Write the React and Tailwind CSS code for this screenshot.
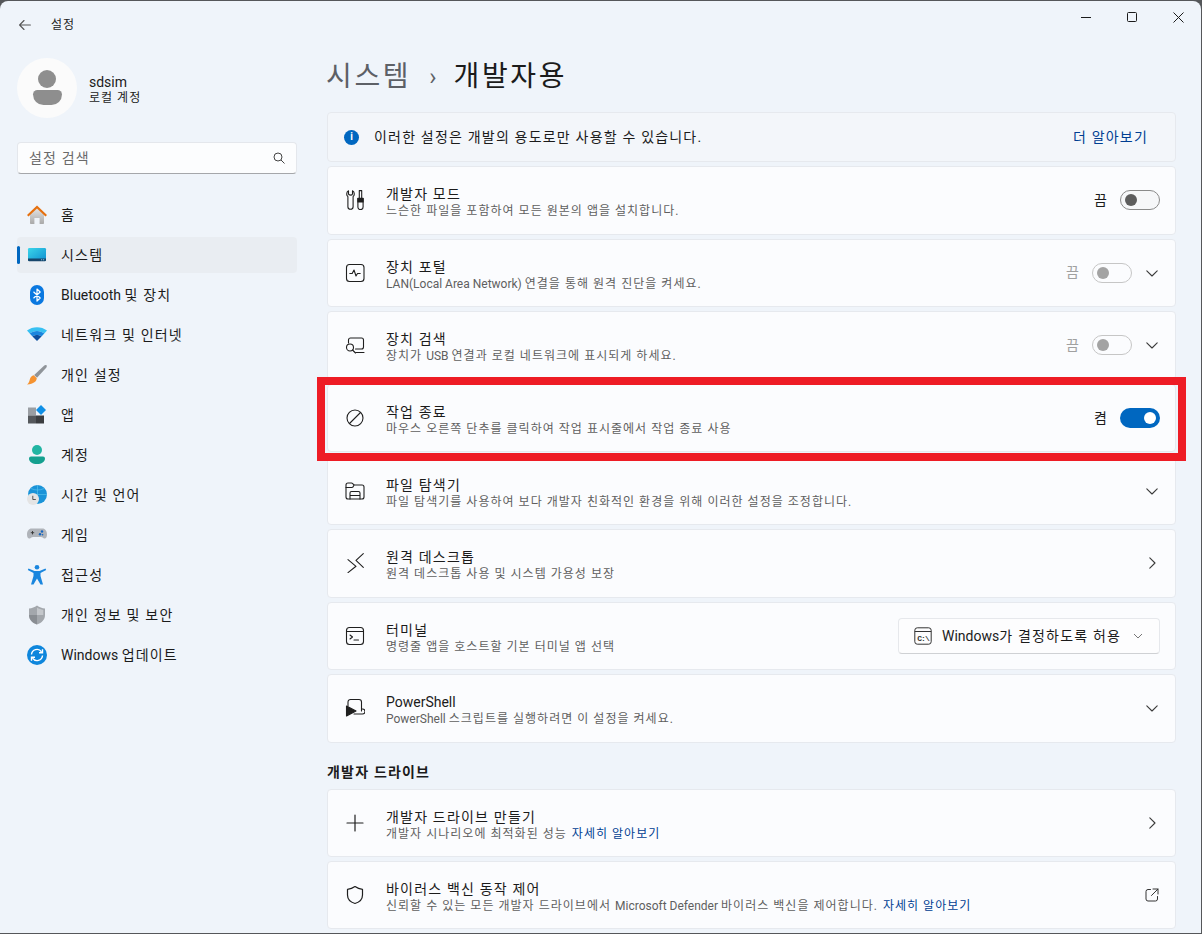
import React from "react";

// hangul runs need extra spacing to match the reference's wider korean face
const T = ({ children }) =>
    String(children)
        .split(/([\uAC00-\uD7A3][\uAC00-\uD7A3 .]*)/)
        .map((part, i) => (i % 2 ? <span key={i} className="tracking-[0.085em]">{part}</span> : part));

const Ico = ({ children, className = "w-5 h-5", vb = "0 0 20 20", sw = 1.1 }) => (
    <svg className={className} viewBox={vb} fill="none" stroke="#1f1f1f" strokeWidth={sw} strokeLinecap="round" strokeLinejoin="round">
        {children}
    </svg>
);

const Chevron = ({ dir = "down", color = "#3a3a3a" }) => (
    <svg className="w-4 h-4" viewBox="0 0 16 16" fill="none" stroke={color} strokeWidth="1.1" strokeLinecap="round" strokeLinejoin="round">
        {dir === "down" ? <path d="M2.8 5.8 8 11l5.2-5.2" /> : <path d="M5.8 2.8 11 8l-5.2 5.2" />}
    </svg>
);

const navIcons = {
    home: (
        <svg className="w-5 h-5" viewBox="0 0 20 20">
            <defs>
                <linearGradient id="hm" x1="0" y1="0" x2="0" y2="1"><stop offset="0" stopColor="#e6e6e6" /><stop offset="1" stopColor="#a9a9a9" /></linearGradient>
            </defs>
            <path d="M3 9 10 2.600 17 9v9.200a.8.8 0 0 1-.8.8H12.600v-6H7.400v6H3.800a.8.8 0 0 1-.8-.8Z" fill="url(#hm)" />
            <path d="M0 10 10 .5 20 10l-1.500 1.400L10 3.400 1.500 11.400Z" fill="#e5700f" />
        </svg>
    ),
    system: (
        <svg className="w-5 h-5" viewBox="0 0 20 20">
            <defs>
                <linearGradient id="sy" x1="0" y1="0" x2="1" y2="1"><stop offset="0" stopColor="#3bd5ea" /><stop offset="1" stopColor="#0f8fd0" /></linearGradient>
            </defs>
            <rect x="1" y="3" width="18" height="13" rx="1.200" fill="url(#sy)" />
            <path d="M1 13.500h18v1.500a1.200 1.200 0 0 1-1.200 1.200H2.200A1.200 1.200 0 0 1 1 15Z" fill="#17456b" />
            <rect x="14" y="14.300" width="1.200" height="1" fill="#7fc6e6" />
            <rect x="16" y="14.300" width="1.200" height="1" fill="#7fc6e6" />
        </svg>
    ),
    bluetooth: (
        <svg className="w-5 h-5" viewBox="0 0 20 20">
            <rect x="3" y="0" width="14" height="20" rx="7" fill="#0a78e0" />
            <path d="M6.500 6.800 13.200 13 10 16V4l3.200 3-6.700 6.200" fill="none" stroke="#fff" strokeWidth="1.200" strokeLinejoin="round" />
        </svg>
    ),
    wifi: (
        <svg className="w-5 h-5" viewBox="0 0 20 20">
            <path d="M0 5.500C5.500 1 14.500 1 20 5.500l-2.700 3C13 5 7 5 2.700 8.500Z" fill="#37c0f2" />
            <path d="M2.700 8.500C7 5 13 5 17.300 8.500L14.500 11.500C12 9.500 8 9.500 5.500 11.500Z" fill="#1a86de" />
            <path d="M5.500 11.500C8 9.500 12 9.500 14.500 11.500L10 16Z" fill="#0d4f9e" />
        </svg>
    ),
    brush: (
        <svg className="w-5 h-5" viewBox="0 0 20 20">
            <path d="M19.500.3c.6.8.3 1.800-.3 2.500L10 12.800 7.200 10 17 .8c.7-.6 1.800-1.100 2.500-.5Z" fill="#8f9499" />
            <path d="M6.800 10.300 9.800 13.300c-.3 3-2.800 5.700-9.800 6.200 1.800-1.200 2.300-3 2.800-5C3.300 12.300 4.700 10.700 6.800 10.300Z" fill="#f59331" />
        </svg>
    ),
    apps: (
        <svg className="w-5 h-5" viewBox="0 0 20 20">
            <rect x="1" y="2.500" width="8" height="8" fill="#9a9ea3" />
            <rect x="1" y="10.500" width="8" height="8" fill="#55585c" />
            <rect x="9" y="10.500" width="8" height="8" fill="#3b3d40" />
            <path d="M14 0 19 5l-5 5-5-5Z" fill="#0f8fe6" />
        </svg>
    ),
    account: (
        <svg className="w-5 h-5" viewBox="0 0 20 20">
            <circle cx="10" cy="5" r="5" fill="#21b5a3" />
            <path d="M2 13.500A2 2 0 0 1 4 11.500h12a2 2 0 0 1 2 2c0 3.500-3.500 5.500-8 5.500s-8-2-8-5.500Z" fill="#14a08f" />
        </svg>
    ),
    time: (
        <svg className="w-5 h-5" viewBox="0 0 20 20">
            <circle cx="10.500" cy="9.500" r="9.500" fill="#1a93d8" />
            <path d="M10.500 0v19M1 9.500h19M4 3.500c4 2 9 2 13 0" stroke="#5cc6ee" strokeWidth=".6" fill="none" />
            <circle cx="6" cy="14" r="6" fill="#e4e4e4" />
            <path d="M5.800 10.800V14.500H8.800" stroke="#444" strokeWidth=".9" fill="none" />
        </svg>
    ),
    game: (
        <svg className="w-5 h-5" viewBox="0 0 20 20">
            <path d="M4.500 3.500h11c2.500 0 4.500 2.500 4.500 6s-1.500 4.500-3 3.900c-1-.5-1.700-1.400-3-1.400H6c-1.300 0-2 .9-3 1.400-1.500.6-3-.4-3-3.900s2-6 4.500-6Z" fill="#b0b4ba" />
            <path d="M3.800 7.700h3.400M5.500 6v3.400" stroke="#333" strokeWidth=".9" />
            <circle cx="15" cy="6.500" r="1.200" fill="#1565c0" />
            <circle cx="13" cy="9.200" r="1.200" fill="#1565c0" />
            <circle cx="15.600" cy="9.800" r=".8" fill="#1565c0" />
        </svg>
    ),
    access: (
        <svg className="w-5 h-5" viewBox="0 0 20 20">
            <circle cx="10" cy="2.300" r="2.300" fill="#1a86de" />
            <path d="M1.500 3.500 7.500 6h5l6-2.500.7 1.600-5.700 3v2.800L16 19.500h-2.500L10 13.500 6.500 19.500H4L6.500 10.900V8.100L.8 5.100Z" fill="#1a86de" />
        </svg>
    ),
    privacy: (
        <svg className="w-5 h-5" viewBox="0 0 20 20">
            <path d="M10 .5c2.500 1.800 5 2.800 8 3v6.500c0 4.500-3 7.800-8 9.500-5-1.700-8-5-8-9.500V3.500c3-.2 5.500-1.200 8-3Z" fill="#a3a7ac" />
            <path d="M10 .5v19c-5-1.700-8-5-8-9.500h8Z" fill="#74787d" opacity=".55" />
            <path d="M10 2.500c2 1.300 4 2.100 6.300 2.400V10H10Z" fill="#c4c7cb" />
        </svg>
    ),
    update: (
        <svg className="w-5 h-5" viewBox="0 0 20 20">
            <circle cx="10" cy="10" r="10" fill="#0e86dc" />
            <path d="M4.500 9.500A5.500 5.500 0 0 1 14.500 6.800M15.500 10.500A5.500 5.500 0 0 1 5.500 13.200" fill="none" stroke="#fff" strokeWidth="1.400" />
            <path d="M15.500 4.300v3.500H12M4.500 15.700v-3.500H8" fill="none" stroke="#fff" strokeWidth="1.400" />
        </svg>
    ),
};

const navItems = [
    ["home", "홈"],
    ["system", "시스템", true],
    ["bluetooth", "Bluetooth 및 장치"],
    ["wifi", "네트워크 및 인터넷"],
    ["brush", "개인 설정"],
    ["apps", "앱"],
    ["account", "계정"],
    ["time", "시간 및 언어"],
    ["game", "게임"],
    ["access", "접근성"],
    ["privacy", "개인 정보 및 보안"],
    ["update", "Windows 업데이트"],
];

const rowIcons = {
    dev: (
        <Ico>
            <path d="M3.500.8C2.300 1.400 1.700 2.600 1.700 3.900c0 1.200.5 2.200 1.200 2.800v10a2.600 2.600 0 0 0 5.200 0v-10c.7-.6 1.200-1.600 1.200-2.800 0-1.300-.6-2.500-1.800-3.100v3c0 .8-.6 1.300-1.500 1.300s-2.500-.5-2.500-1.300Z" />
            <path d="M14.300.6h2.400v7.600h-2.400ZM12.900 8.200h5.200v8.800a2.600 2.600 0 0 1-5.200 0Z" />
            <path d="M12.900 8.600h5.200v3.400h-5.200Z" fill="#1f1f1f" />
        </Ico>
    ),
    portal: (
        <Ico>
            <rect x="1.500" y="1.500" width="17.500" height="17" rx="3" />
            <path d="M4.800 10.500h2.400L9 7l2 6 1.500-2.500h2.700" />
        </Ico>
    ),
    search: (
        <Ico>
            <path d="M3.500 8V5a2 2 0 0 1 2-2h11a2 2 0 0 1 2 2v7a2 2 0 0 1-2 2h-6" />
            <circle cx="5" cy="12.500" r="3.500" />
            <path d="M7.500 15 10.500 18M11 17.500h8" />
        </Ico>
    ),
    block: (
        <Ico>
            <circle cx="10" cy="10" r="8" />
            <path d="M4.500 15.500 15.500 4.500" />
        </Ico>
    ),
    folder: (
        <Ico>
            <path d="M1 4a2 2 0 0 1 2-2h3.500c.8 0 1.300.9 2 1.500.4.300.8.500 1.300.5H17a2 2 0 0 1 2 2v10a2 2 0 0 1-2 2H3a2 2 0 0 1-2-2Z" />
            <path d="M1 6.500h6c.8 0 1.200-.5 1.800-2" />
            <path d="M5 18v-6a1.500 1.500 0 0 1 1.500-1.500h7A1.500 1.500 0 0 1 15 12v6M5 14.500h10" />
        </Ico>
    ),
    remote: (
        <Ico>
            <path d="M3 6.600 11 13.300 3 19.600" />
            <path d="M18.300.6 11 7.300 18.300 14.300" />
        </Ico>
    ),
    terminal: (
        <Ico>
            <rect x="1.500" y="1.500" width="17" height="17" rx="3" />
            <path d="M1.500 5.500h17M5 9l2.500 2L5 13M9 14h4.500" />
        </Ico>
    ),
    powershell: (
        <Ico>
            <path d="M3 8V4a2.500 2.500 0 0 1 2.500-2.500H14A2.500 2.500 0 0 1 16.500 4v9" />
            <path d="M16.500 11h1a1.500 1.500 0 0 1 0 5H9" />
            <path d="M1.500 8 11 13 1.500 18Z" fill="#1f1f1f" />
        </Ico>
    ),
    plus: (
        <Ico sw="1.200">
            <path d="M10 2v16M2 10h16" />
        </Ico>
    ),
    shield: (
        <Ico sw="1.200">
            <path d="M10 1.500c2.300 1.700 4.700 2.600 7.500 2.800v5.700c0 4-2.500 7-7.500 8.500-5-1.500-7.500-4.500-7.500-8.500V4.300C5.300 4.100 7.700 3.200 10 1.500Z" />
        </Ico>
    ),
};

const Toggle = ({ on, disabled }) => {
    if (on) {
        return (
            <div className="w-10 h-5 rounded-full bg-[#0067c0] flex items-center justify-end pr-1">
                <div className="w-3 h-3 rounded-full bg-white" />
            </div>
        );
    }
    return (
        <div className={disabled ? "w-10 h-5 rounded-full border border-[#c6c6c6] flex items-center pl-[3.500px]" : "w-10 h-5 rounded-full border border-[#8a8a8a] bg-[#f6f7f9] flex items-center pl-[3.500px]"}>
            <div className={disabled ? "w-3 h-3 rounded-full bg-[#a3a3a3]" : "w-3 h-3 rounded-full bg-[#5d5d5d]"} />
        </div>
    );
};

const Row = ({ icon, title, sub, link, children, className = "h-[68.6px]" }) => (
    <div className={`${className} flex items-center rounded-[4px] border border-[#e6e9ee] bg-[#fbfcfe] pl-[17px] pr-[15px]`}>
        <div className="w-5 h-5 shrink-0">{rowIcons[icon]}</div>
        <div className="ml-[21px] flex-1 min-w-0 mt-[4px]">
            <div className="text-[14px] leading-[18px] text-[#1b1b1b]"><T>{title}</T></div>
            <div className="text-[12px] leading-[16px] text-[#5f5f5f]">
                <T>{sub}</T>
                {link && <span className="ml-[5px] text-[#003e92]"><T>{link}</T></span>}
            </div>
        </div>
        {children}
    </div>
);

const OffLabel = ({ disabled, text = "끔" }) => (
    <span className={disabled ? "text-[14px] text-[#a0a0a0] mr-[13px]" : "text-[14px] text-[#1b1b1b] mr-[13px]"}>{text}</span>
);

function App() {
    return (
        <div className="w-[1202px] h-[934px] overflow-hidden bg-[#55575a] font-['Roboto','Noto_Sans_CJK_KR',sans-serif]">
            <div className="w-[1201px] h-[932px] mt-px rounded-t-[8px] overflow-hidden bg-[#eff4fa] flex flex-col">
                {/* title bar */}
                <div className="h-[47px] shrink-0 flex items-center pl-[19px] pt-[1px]">
                    <svg className="w-3 h-3" viewBox="0 0 12 12" fill="none" stroke="#555" strokeWidth="1.100" strokeLinecap="round" strokeLinejoin="round">
                        <path d="M.6 6h10.800M5 1.500.6 6 5 10.500" />
                    </svg>
                    <span className="ml-5 text-[12px] text-[#1b1b1b]"><T>설정</T></span>
                    <div className="ml-auto self-start mt-[10px] h-[10px] flex items-center">
                        <div className="w-[46px] flex justify-center"><div className="w-[10px] h-px bg-[#1b1b1b]" /></div>
                        <div className="w-[46px] flex justify-center"><div className="w-[10px] h-[10px] rounded-[1.500px] border border-[#1b1b1b]" /></div>
                        <div className="w-[46px] flex justify-center">
                            <svg className="w-[11px] h-[11px]" viewBox="0 0 11 11" stroke="#1b1b1b" strokeWidth="1"><path d="M.5.5l10 10M10.500.5l-10 10" /></svg>
                        </div>
                    </div>
                </div>

                <div className="flex-1 flex min-h-0">
                    {/* sidebar */}
                    <aside className="w-[327px] shrink-0 pl-[17px] pr-[30px]">
                        <div className="flex items-center mt-[10px] h-[60px]">
                            <div className="w-[60px] h-[60px] rounded-full bg-[#fbfbfb] flex flex-col items-center pt-[12px]">
                                <div className="w-[18px] h-[18px] rounded-full bg-[#8e8e8e]" />
                                <div className="w-[29px] h-[15px] mt-[2px] rounded-b-[14px] rounded-t-[6px] bg-[#8e8e8e]" />
                            </div>
                            <div className="ml-3 pt-[4px]">
                                <div className="text-[14px] leading-[17px] text-[#1b1b1b]">sdsim</div>
                                <div className="text-[12px] leading-[15px] text-[#1b1b1b]"><T>로컬 계정</T></div>
                            </div>
                        </div>
                        <div className="mt-6 h-8 rounded-[4px] border border-[#e4e7ec] border-b-[#a5a7aa] bg-[#fcfdfe] flex items-center pl-[11px] pr-[11px]">
                            <span className="text-[14px] text-[#6a6a6a] flex-1"><T>설정 검색</T></span>
                            <svg className="w-3 h-3" viewBox="0 0 12 12" fill="none" stroke="#444" strokeWidth="1"><circle cx="5" cy="5" r="4" /><path d="M8 8l3.500 3.500" /></svg>
                        </div>
                        <nav className="mt-[23px] flex flex-col gap-1">
                            {navItems.map(([icon, label, active]) => (
                                <div key={label} className={active ? "relative h-9 rounded-[4px] bg-[#e9edf2] flex items-center pl-[10px]" : "h-9 flex items-center pl-[10px]"}>
                                    {active && <div className="absolute left-0 top-[9px] w-[3px] h-[18px] rounded-full bg-[#0067c0]" />}
                                    {navIcons[icon]}
                                    <span className="ml-[14px] text-[14px] text-[#1b1b1b]"><T>{label}</T></span>
                                </div>
                            ))}
                        </nav>
                    </aside>

                    {/* main */}
                    <main className="flex-1 min-w-0 pr-[25px]">
                        <h1 className="h-[65px] flex items-start text-[28px] leading-[60px] -mt-[1px] -ml-[1px]">
                            <span className="text-[#5d6066] tracking-[0.095em]">시스템</span>
                            <span className="ml-[18px] mr-[17px] text-[#5d6066] text-[24px]">›</span>
                            <span className="text-[#1b1b1b] tracking-[0.095em]">개발자용</span>
                        </h1>
                        <div className="flex flex-col gap-1">
                            <div className="h-[50px] flex items-center rounded-[4px] border border-[#e6e9ee] bg-[#f3f6fa] pl-4 pr-[27px]">
                                <div className="w-[15px] h-[15px] rounded-full bg-[#0067c0] flex items-center justify-center text-white text-[10px] leading-none font-bold">i</div>
                                <span className="ml-[15px] text-[14px] text-[#1b1b1b] flex-1"><T>이러한 설정은 개발의 용도로만 사용할 수 있습니다.</T></span>
                                <span className="text-[14px] text-[#003e92]"><T>더 알아보기</T></span>
                            </div>
                            <Row icon="dev" title="개발자 모드" sub="느슨한 파일을 포함하여 모든 원본의 앱을 설치합니다.">
                                <OffLabel />
                                <Toggle />
                            </Row>
                            <Row icon="portal" title="장치 포털" sub="LAN(Local Area Network) 연결을 통해 원격 진단을 켜세요.">
                                <OffLabel disabled />
                                <Toggle disabled />
                                <div className="ml-[12px]"><Chevron /></div>
                            </Row>
                            <Row icon="search" title="장치 검색" sub="장치가 USB 연결과 로컬 네트워크에 표시되게 하세요.">
                                <OffLabel disabled />
                                <Toggle disabled />
                                <div className="ml-[12px]"><Chevron /></div>
                            </Row>
                            <div className="relative">
                                <Row icon="block" title="작업 종료" sub="마우스 오른쪽 단추를 클릭하여 작업 표시줄에서 작업 종료 사용">
                                    <OffLabel text="켬" />
                                    <Toggle on />
                                </Row>
                                <div className="absolute -left-[10px] -right-[10px] -top-[7px] -bottom-[9px] border-[8px] border-[#ee1c25] pointer-events-none" />
                            </div>
                            <Row icon="folder" title="파일 탐색기" sub="파일 탐색기를 사용하여 보다 개발자 친화적인 환경을 위해 이러한 설정을 조정합니다.">
                                <Chevron />
                            </Row>
                            <Row icon="remote" title="원격 데스크톱" sub="원격 데스크톱 사용 및 시스템 가용성 보장">
                                <Chevron dir="right" />
                            </Row>
                            <Row icon="terminal" title="터미널" sub="명령줄 앱을 호스트할 기본 터미널 앱 선택">
                                <div className="w-[262px] h-[36px] rounded-[4px] border border-[#e6e8ec] border-b-[#cfd1d4] bg-[#fdfdfe] flex items-center pl-[15px] pr-[16px]">
                                    <svg className="w-[18px] h-[18px] shrink-0" viewBox="0 0 18 18" fill="none" stroke="#333" strokeWidth="1">
                                        <rect x=".8" y=".8" width="16.400" height="16.400" rx="2.500" />
                                        <path d="M.8 4.500h16.400" />
                                        <text x="9" y="13.500" textAnchor="middle" fontSize="8" fontWeight="700" fill="#333" stroke="none" fontFamily="Liberation Mono, monospace" letterSpacing="-1">C:\</text>
                                    </svg>
                                    <span className="ml-[10px] pt-[2px] text-[14px] text-[#1b1b1b] flex-1 whitespace-nowrap"><T>Windows가 결정하도록 허용</T></span>
                                    <svg className="w-[10px] h-[10px] shrink-0" viewBox="0 0 10 10" fill="none" stroke="#777" strokeWidth="1"><path d="M1 3l4 4 4-4" /></svg>
                                </div>
                            </Row>
                            <Row icon="powershell" title="PowerShell" sub="PowerShell 스크립트를 실행하려면 이 설정을 켜세요.">
                                <Chevron />
                            </Row>
                        </div>
                        <h2 className="mt-[19px] mb-[7px] h-[20px] leading-[20px] text-[14px] font-semibold text-[#1b1b1b]"><T>개발자 드라이브</T></h2>
                        <div className="flex flex-col gap-1">
                            <Row className="h-[68px]" icon="plus" title="개발자 드라이브 만들기" sub="개발자 시나리오에 최적화된 성능" link="자세히 알아보기">
                                <Chevron dir="right" />
                            </Row>
                            <Row className="h-[68px]" icon="shield" title="바이러스 백신 동작 제어" sub="신뢰할 수 있는 모든 개발자 드라이브에서 Microsoft Defender 바이러스 백신을 제어합니다." link="자세히 알아보기">
                                <svg className="w-[14px] h-[14px] mr-px" viewBox="0 0 14 14" fill="none" stroke="#333" strokeWidth="1" strokeLinecap="round" strokeLinejoin="round">
                                    <path d="M5.500 1.500H3A2 2 0 0 0 1 3.500V11a2 2 0 0 0 2 2h7.500a2 2 0 0 0 2-2V8.500M8 1h5v5M13 1 6.500 7.500" />
                                </svg>
                            </Row>
                        </div>
                    </main>
                </div>
            </div>
        </div>
    );
}

export default App;
